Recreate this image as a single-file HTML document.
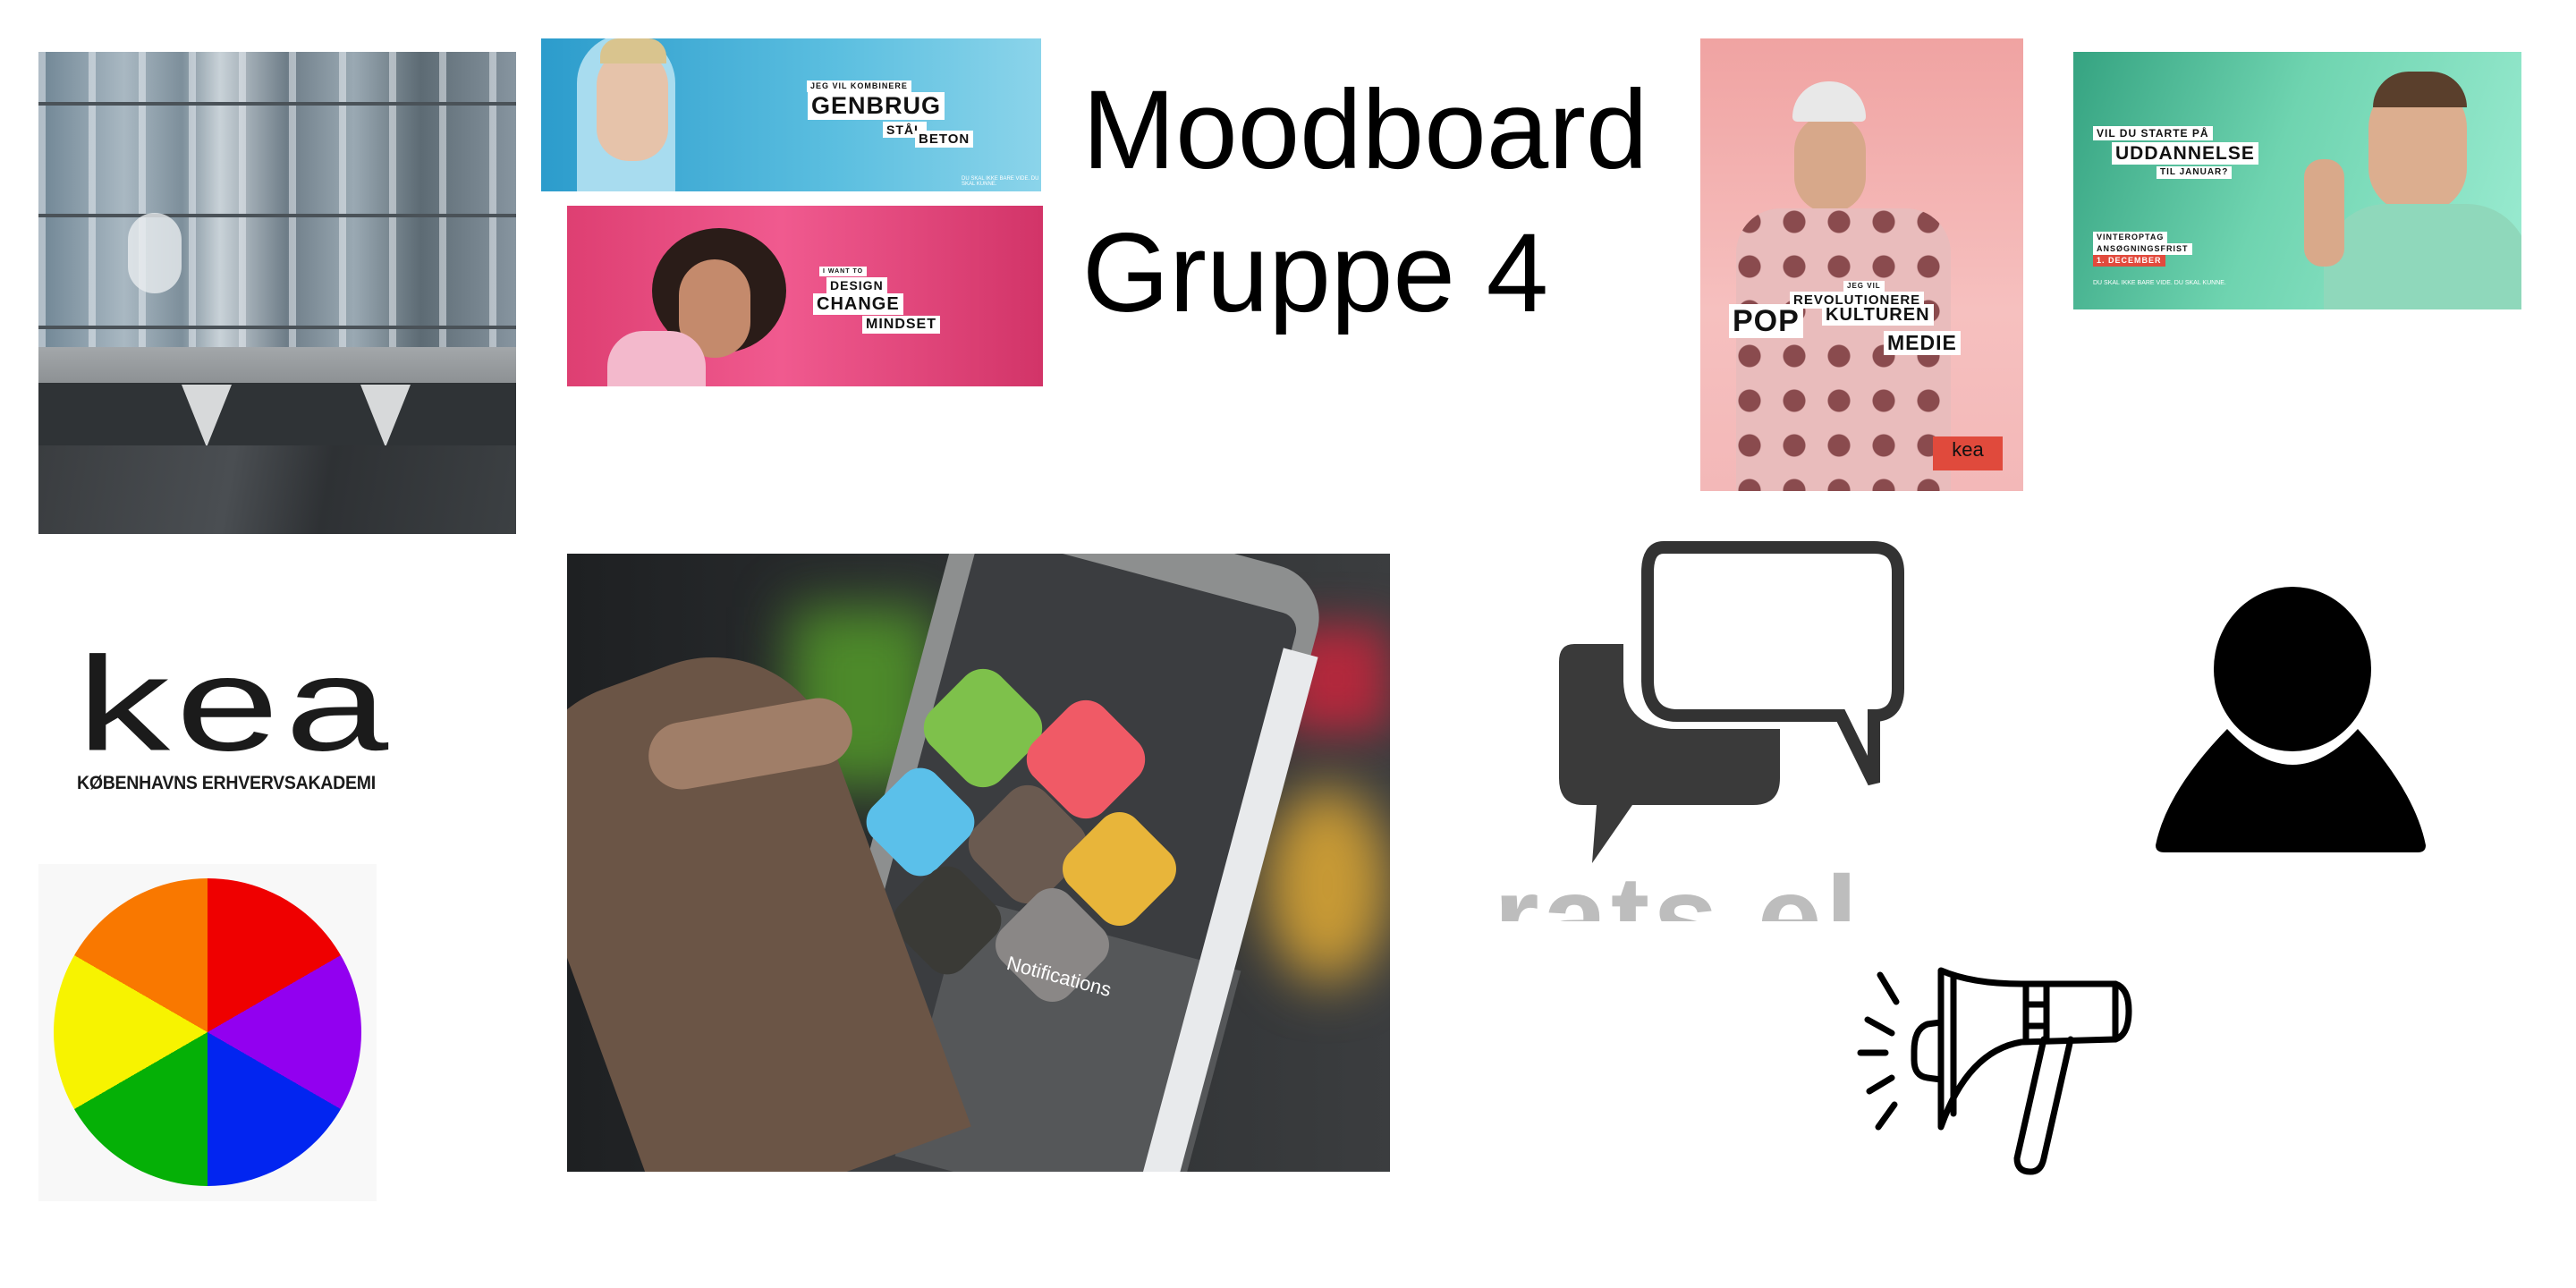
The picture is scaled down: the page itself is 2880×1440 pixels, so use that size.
<!DOCTYPE html>
<html><head><meta charset="utf-8"><style>
*{margin:0;padding:0;box-sizing:border-box}
body{width:2880px;height:1440px;background:#fff;position:relative;overflow:hidden;font-family:"Liberation Sans",sans-serif}
.a{position:absolute}
.tb{position:absolute;background:#fff;color:#111;font-weight:bold;font-family:"Liberation Sans",sans-serif;line-height:1;padding:2px 4px;letter-spacing:1px}
</style></head><body>

<!-- building -->
<div class="a" style="left:43px;top:58px;width:534px;height:539px;overflow:hidden;background:#3c3f42">
  <div class="a" style="left:0;top:0;width:534px;height:330px;background:linear-gradient(90deg,#6f8594 0%,#a9b8c2 18%,#7d8f9b 30%,#c9d2d8 38%,#6e7d88 52%,#9aa9b3 66%,#5d6b74 80%,#8795a0 100%)"></div>
  <div class="a" style="left:0;top:0;width:534px;height:330px;background:repeating-linear-gradient(90deg,rgba(230,235,240,.55) 0 8px,transparent 8px 56px)"></div>
  <div class="a" style="left:0;top:0;width:534px;height:330px;background:repeating-linear-gradient(180deg,transparent 0 56px,#4a5258 56px 60px,transparent 60px 125px)"></div>
  <div class="a" style="left:100px;top:180px;width:60px;height:90px;background:#e8ecef;border-radius:30px;opacity:.8"></div>
  <div class="a" style="left:0;top:330px;width:534px;height:40px;background:linear-gradient(180deg,#a3a7aa,#8d9194)"></div>
  <div class="a" style="left:0;top:370px;width:534px;height:70px;background:#2f3336"></div>
  <div class="a" style="left:160px;top:372px;width:0;height:0;border-left:28px solid transparent;border-right:28px solid transparent;border-top:70px solid #d7d9da"></div>
  <div class="a" style="left:360px;top:372px;width:0;height:0;border-left:28px solid transparent;border-right:28px solid transparent;border-top:70px solid #d7d9da"></div>
  <div class="a" style="left:0;top:440px;width:534px;height:99px;background:linear-gradient(100deg,#3a3d40 0%,#4a4e52 40%,#2e3134 60%,#3c4043 100%)"></div>
</div>

<!-- blue banner -->
<div class="a" style="left:605px;top:43px;width:559px;height:171px;overflow:hidden;background:linear-gradient(90deg,#2c9ccc,#5cbfe0 60%,#8bd4ea)">
  <div class="a" style="left:40px;top:-5px;width:110px;height:190px;background:#a8dcef;border-radius:55px 55px 0 0"></div>
  <div class="a" style="left:62px;top:12px;width:80px;height:125px;background:#e6c3aa;border-radius:40px 40px 36px 36px"></div>
  <div class="a" style="left:66px;top:0;width:74px;height:28px;background:#d9c48e;border-radius:20px 20px 0 0"></div>
  <div class="tb" style="left:297px;top:47px;font-size:9px">JEG VIL KOMBINERE</div>
  <div class="tb" style="left:298px;top:60px;font-size:27px">GENBRUG</div>
  <div class="tb" style="left:382px;top:93px;font-size:14px">STÅL</div>
  <div class="tb" style="left:418px;top:103px;font-size:15px">BETON</div>
  <div class="a" style="left:470px;top:154px;font-size:6px;color:#fff">DU SKAL IKKE BARE VIDE. DU SKAL KUNNE.</div>
</div>

<!-- pink banner -->
<div class="a" style="left:634px;top:230px;width:532px;height:202px;overflow:hidden;background:linear-gradient(90deg,#de3f72,#f05a8f 45%,#d23468)">
  <div class="a" style="left:95px;top:25px;width:150px;height:140px;background:#2a1c18;border-radius:50%"></div>
  <div class="a" style="left:125px;top:60px;width:80px;height:110px;background:#c48a6c;border-radius:40px"></div>
  <div class="a" style="left:45px;top:140px;width:110px;height:70px;background:#f3b9cc;border-radius:40px 40px 0 0"></div>
  <div class="tb" style="left:282px;top:68px;font-size:7px">I WANT TO</div>
  <div class="tb" style="left:290px;top:80px;font-size:14px">DESIGN</div>
  <div class="tb" style="left:275px;top:98px;font-size:20px">CHANGE</div>
  <div class="tb" style="left:330px;top:123px;font-size:16px">MINDSET</div>
</div>

<!-- title -->
<div class="a" style="left:1210px;top:66px;font-size:125px;line-height:160px;color:#000;font-family:'Liberation Sans',sans-serif">Moodboard<br>Gruppe 4</div>

<!-- pink poster -->
<div class="a" style="left:1901px;top:43px;width:361px;height:506px;overflow:hidden;background:linear-gradient(180deg,#f0a3a2,#f6c0bf 60%,#f3b8b8)">
  <div class="a" style="left:105px;top:85px;width:80px;height:110px;background:#d7a88a;border-radius:40px"></div>
  <div class="a" style="left:103px;top:48px;width:82px;height:45px;background:#e8e8e8;border-radius:40px 40px 5px 5px"></div>
  <div class="a" style="left:40px;top:190px;width:240px;height:316px;background:radial-gradient(circle at 30% 30%,#8a4b4e 0 12px,transparent 13px) 0 0/50px 50px,#e9bcbc;border-radius:50px 50px 0 0"></div>
  <div class="tb" style="left:160px;top:271px;font-size:8px">JEG VIL</div>
  <div class="tb" style="left:100px;top:283px;font-size:15px">REVOLUTIONERE</div>
  <div class="tb" style="left:32px;top:297px;font-size:34px">POP</div>
  <div class="tb" style="left:136px;top:297px;font-size:20px">KULTUREN</div>
  <div class="tb" style="left:205px;top:327px;font-size:23px">MEDIE</div>
  <div class="a" style="left:260px;top:445px;width:78px;height:38px;background:#e04a3c;color:#111;font-size:22px;text-align:center;line-height:30px">kea</div>
</div>

<!-- green banner -->
<div class="a" style="left:2318px;top:58px;width:501px;height:288px;overflow:hidden;background:linear-gradient(110deg,#35a381,#6fd4b0 45%,#9cecd2)">
  <div class="a" style="left:330px;top:30px;width:110px;height:150px;background:#dcae8f;border-radius:55px 55px 50px 50px"></div>
  <div class="a" style="left:335px;top:22px;width:105px;height:40px;background:#5a3f2c;border-radius:50px 50px 0 0"></div>
  <div class="a" style="left:280px;top:170px;width:230px;height:130px;background:#8fd8bb;border-radius:70px 70px 0 0"></div>
  <div class="a" style="left:258px;top:120px;width:45px;height:120px;background:#d9a98a;border-radius:20px"></div>
  <div class="tb" style="left:22px;top:83px;font-size:12px">VIL DU STARTE PÅ</div>
  <div class="tb" style="left:43px;top:101px;font-size:21px">UDDANNELSE</div>
  <div class="tb" style="left:93px;top:128px;font-size:10px">TIL JANUAR?</div>
  <div class="tb" style="left:22px;top:201px;font-size:9px">VINTEROPTAG</div>
  <div class="tb" style="left:22px;top:214px;font-size:9px">ANSØGNINGSFRIST</div>
  <div class="tb" style="left:22px;top:227px;font-size:9px;background:#e24a3d;color:#fff">1. DECEMBER</div>
  <div class="a" style="left:22px;top:255px;font-size:7px;color:#fff">DU SKAL IKKE BARE VIDE. DU SKAL KUNNE.</div>
</div>

<!-- kea logo -->
<div class="a" style="left:86px;top:712px;font-size:130px;line-height:130px;color:#1b1b1b;letter-spacing:4px;font-family:'Liberation Sans',sans-serif;transform:scale(1.6,1.15);transform-origin:0 0">kea</div>
<div class="a" style="left:86px;top:864px;font-size:21px;font-weight:bold;color:#1b1b1b;letter-spacing:-.3px;transform:scaleX(0.93);transform-origin:0 0">KØBENHAVNS ERHVERVSAKADEMI</div>

<!-- color wheel -->
<div class="a" style="left:43px;top:966px;width:378px;height:377px;background:#f8f8f8"></div>
<div class="a" style="left:60px;top:982px;width:344px;height:344px;border-radius:50%;background:conic-gradient(#ef0000 0 60deg,#9200f0 60deg 120deg,#0225f0 120deg 180deg,#05b006 180deg 240deg,#f7f300 240deg 300deg,#f97800 300deg 360deg)"></div>

<!-- phone photo -->
<div class="a" style="left:634px;top:619px;width:920px;height:691px;overflow:hidden;background:linear-gradient(90deg,#1e2022,#2a2d2f 40%,#3b3d3f)">
  <div class="a" style="left:250px;top:60px;width:160px;height:200px;background:#4d8a2a;filter:blur(30px)"></div>
  <div class="a" style="left:780px;top:260px;width:140px;height:220px;background:#c89a35;filter:blur(30px);border-radius:50%"></div>
  <div class="a" style="left:800px;top:80px;width:120px;height:120px;background:#b3283c;filter:blur(25px)"></div>
  <div class="a" style="left:330px;top:-40px;width:420px;height:860px;background:#8d8f8f;border-radius:60px;transform:rotate(15deg);transform-origin:50% 50%"></div>
  <div class="a" style="left:355px;top:10px;width:370px;height:780px;background:#3b3d40;border-radius:20px;transform:rotate(15deg)"></div>
  <div class="a" style="left:400px;top:420px;width:320px;height:300px;background:#555759;transform:rotate(15deg)"></div>
  <div class="a" style="left:720px;top:100px;width:40px;height:620px;background:#e8eaec;transform:rotate(15deg)"></div>
  <div class="a" style="left:410px;top:140px;width:110px;height:110px;background:#7ec14b;border-radius:28px;transform:rotate(45deg)"></div>
  <div class="a" style="left:525px;top:175px;width:110px;height:110px;background:#f05a66;border-radius:28px;transform:rotate(45deg)"></div>
  <div class="a" style="left:345px;top:250px;width:100px;height:100px;background:#5bc0ea;border-radius:25px;transform:rotate(45deg)"></div>
  <div class="a" style="left:460px;top:270px;width:110px;height:110px;background:#6a5a50;border-radius:28px;transform:rotate(45deg)"></div>
  <div class="a" style="left:565px;top:300px;width:105px;height:105px;background:#e8b53a;border-radius:26px;transform:rotate(45deg)"></div>
  <div class="a" style="left:375px;top:360px;width:100px;height:100px;background:#3a3a36;border-radius:25px;transform:rotate(45deg)"></div>
  <div class="a" style="left:490px;top:385px;width:105px;height:105px;background:#8a8786;border-radius:26px;transform:rotate(45deg)"></div>
  <div class="a" style="left:0;top:120px;width:360px;height:600px;background:#6b5546;border-radius:140px 140px 0 0;transform:rotate(-20deg)"></div>
  <div class="a" style="left:90px;top:175px;width:230px;height:75px;background:#a07e68;border-radius:40px;transform:rotate(-10deg)"></div>
  <div class="a" style="left:490px;top:460px;color:#fff;font-size:22px;transform:rotate(15deg)">Notifications</div>
</div>

<!-- chat icon -->
<svg class="a" style="left:1730px;top:600px" width="420" height="380" viewBox="0 0 420 380">
  <path d="M30 120 Q13 120 13 140 L13 270 Q13 300 40 300 L55 300 L50 365 L95 300 L230 300 Q260 300 260 270 L260 120 Z" fill="#3a3a3a"/>
  <path d="M130 12 L365 12 Q392 12 392 40 L392 170 Q392 200 365 200 L365 275 L328 200 L145 200 Q100 200 100 160 L100 40 Q100 12 130 12 Z" fill="#fff" stroke="#fff" stroke-width="30"/>
  <path d="M130 12 L365 12 Q392 12 392 40 L392 170 Q392 200 365 200 L365 275 L328 200 L145 200 Q112 200 112 160 L112 40 Q112 12 130 12 Z" fill="#fff" stroke="#333" stroke-width="14"/>
</svg>
<div class="a" style="left:1670px;top:960px;width:540px;height:70px;overflow:hidden;color:#bdbdbd;font-size:130px;font-weight:bold;line-height:130px;letter-spacing:4px">rats.el</div>

<!-- person icon -->
<svg class="a" style="left:2400px;top:655px" width="325" height="305" viewBox="0 0 325 305">
  <ellipse cx="163" cy="93" rx="88" ry="92" fill="#000"/>
  <path d="M90 160 Q163 240 236 160 Q300 230 312 290 Q312 298 303 298 L20 298 Q10 298 10 290 Q22 230 90 160 Z" fill="#000"/>
</svg>

<!-- megaphone -->
<svg class="a" style="left:2060px;top:1065px" width="350" height="265" viewBox="0 0 350 265" fill="none" stroke="#000" stroke-width="7" stroke-linecap="round" stroke-linejoin="round">
  <path d="M110 20 L110 195 Q140 110 200 100 L305 97 L305 35 L200 35 Q145 35 110 20 Z"/>
  <path d="M124 28 L124 180"/>
  <path d="M110 78 L95 80 Q80 85 80 110 L80 120 Q80 138 95 140 L110 142"/>
  <path d="M205 35 L205 97 M228 35 L228 97 M205 58 L228 58 M205 82 L228 82"/>
  <path d="M305 35 Q320 40 320 65 Q320 92 305 97"/>
  <path d="M225 97 L195 230 Q195 245 210 245 Q222 245 225 230 L255 97"/>
  <path d="M42 25 L60 55 M28 75 L55 90 M20 112 L48 112 M30 155 L55 140 M40 195 L58 170"/>
</svg>

</body></html>
